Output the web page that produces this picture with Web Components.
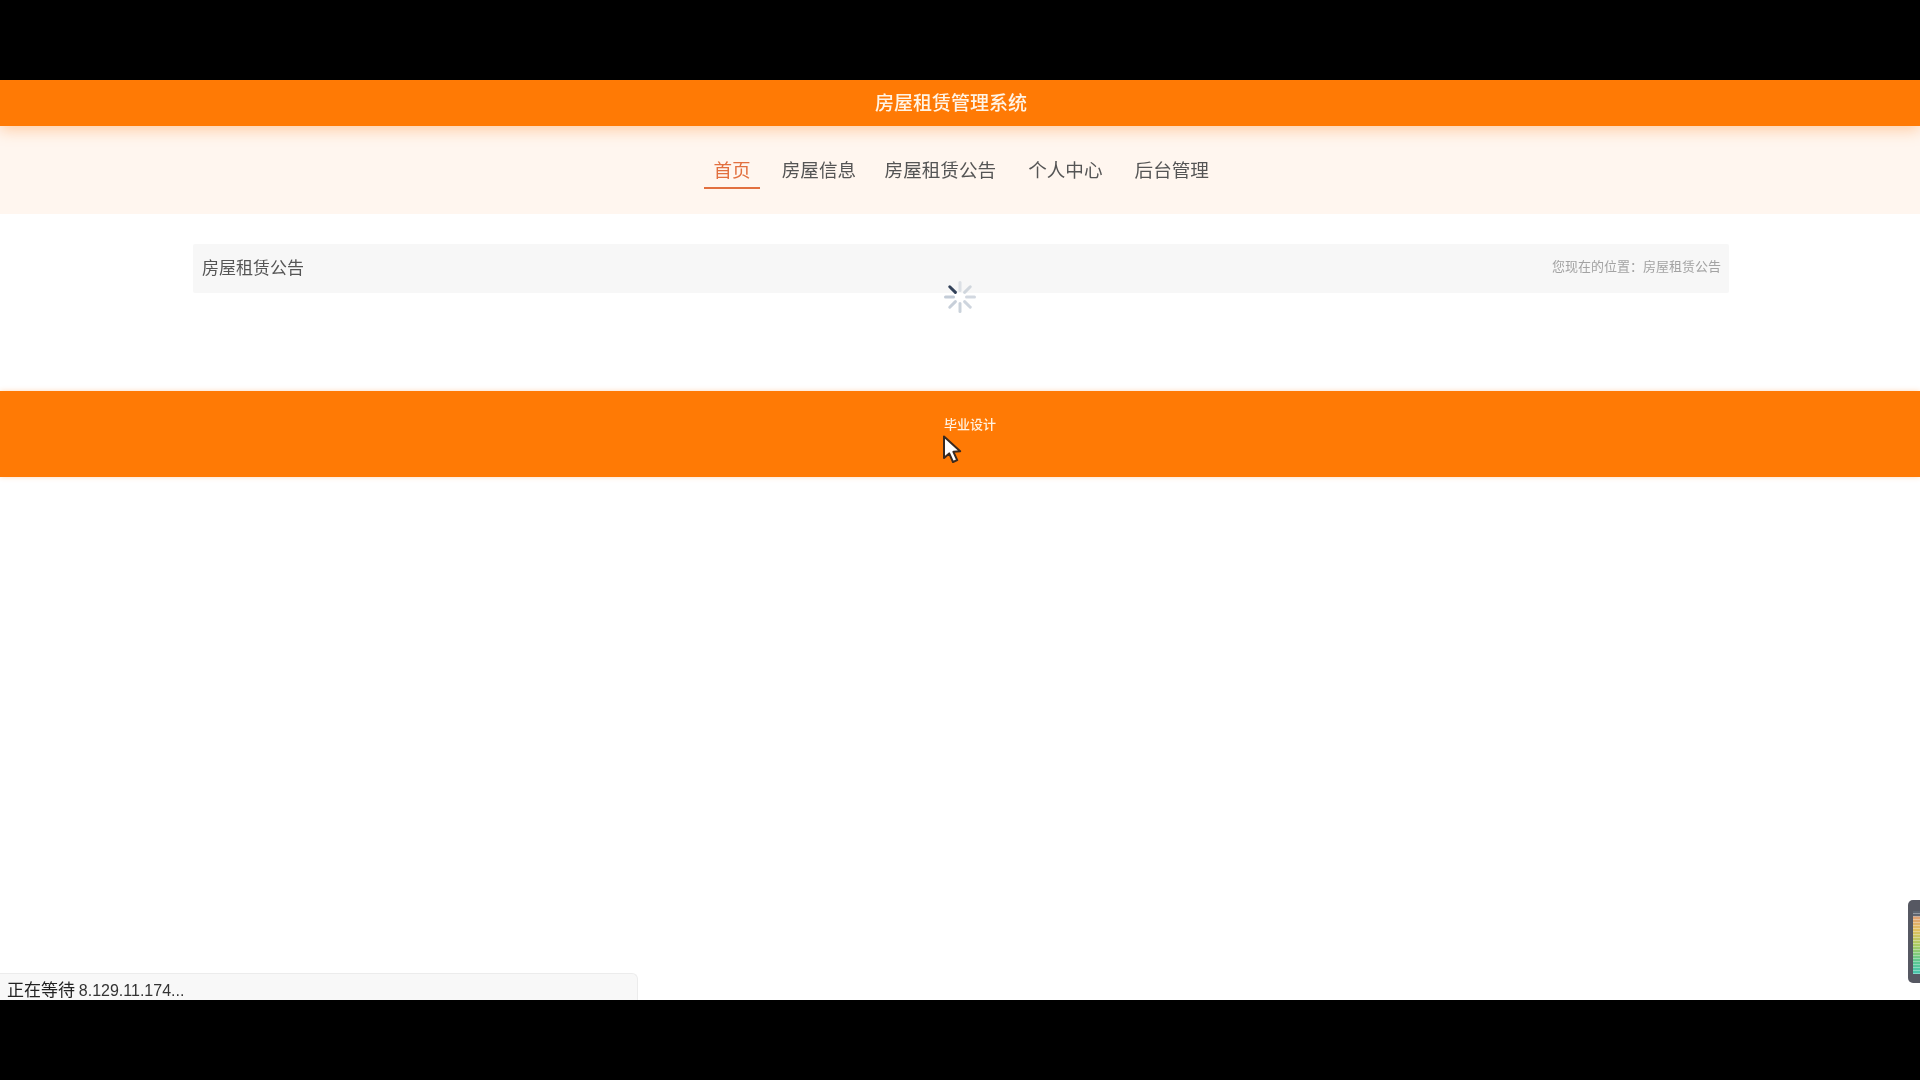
<!DOCTYPE html>
<html lang="zh"><head><meta charset="utf-8"><title>房屋租赁管理系统</title>
<style>
html,body{margin:0;height:100%;background:#000;overflow:hidden}
body{font-family:"Noto Sans CJK SC","Liberation Sans",sans-serif}
</style></head><body>
<video-frame>
  <site-header slot="page">房屋租赁管理系统</site-header>
  <site-nav slot="page">
    <nav-item active>首页</nav-item>
    <nav-item style="margin-left:12px">房屋信息</nav-item>
    <nav-item style="margin-left:9.5px">房屋租赁公告</nav-item>
    <nav-item style="margin-left:13px">个人中心</nav-item>
    <nav-item style="margin-left:13px">后台管理</nav-item>
  </site-nav>
  <page-bar slot="page" title-text="房屋租赁公告" crumb="您现在的位置：房屋租赁公告"></page-bar>
  <site-footer slot="page">毕业设计</site-footer>
</video-frame>
<script>
function def(name, html, init){
  customElements.define(name, class extends HTMLElement{
    constructor(){super();this.attachShadow({mode:'open'}).innerHTML=html;}
    connectedCallback(){ if(init) init(this); }
  });
}
const spokes=[...Array(8)].map((_,i)=>{
  const op=i===0?1:(i===1?.25:.3+.03*i);
  const col=i===0?'#33425a':'#8a9bb0';
  return `<line x1="16" y1="1.5" x2="16" y2="9.5" stroke="${col}" stroke-opacity="${op}" stroke-width="3" stroke-linecap="round" transform="rotate(${-45+i*45} 16 16)"/>`;
}).join('');
def('video-frame',`<style>
:host{display:flex;flex-direction:column;height:1080px;width:1920px;position:relative;background:#000}
.top,.bottom{flex:0 0 80px;background:#000}
.screen{flex:1;background:#fff;position:relative;overflow:hidden;display:flex;flex-direction:column}
.spinner{position:absolute;left:944px;top:201px;width:32px;height:32px;filter:blur(.5px)}
.cursor{position:absolute;left:942px;top:355px;width:20px;height:29px;filter:blur(.4px)}
.status{position:absolute;left:0;bottom:0;width:638px;height:27px;box-sizing:border-box;background:#f8f8f8;border:1px solid #ececec;border-left:0;border-bottom:0;border-top-right-radius:6px;color:#222;font-size:17px;line-height:29px;padding-left:7px;white-space:nowrap;overflow:hidden;filter:blur(.3px)}
.status span{font-family:"Liberation Sans",sans-serif;font-size:16px;color:#333}
.widget{position:absolute;right:-8px;top:820px;width:20px;height:83px;box-sizing:border-box;border-radius:5px;background:#565862;padding:11px 3px 9px 5px;filter:blur(.4px)}
.widget i{display:block;height:100%;background:repeating-linear-gradient(#0000 0 2px,#fff5 2px 3px),linear-gradient(#5d6470 0 7%,#e0a070 10%,#e2c05e 30%,#a8cb62 55%,#5cc890 80%,#46c4ae 100%)}
</style>
<div class="top"></div>
<div class="screen"><slot name="page"></slot>
<svg class="spinner" viewBox="0 0 32 32" aria-hidden="true">${spokes}</svg>
<svg class="cursor" viewBox="0 0 20 29" aria-hidden="true"><path d="M2 1.5V23l5.2-4.6L11 27l4.2-1.9-3.8-8.3 6.8-.5z" fill="#fff" stroke="#3a2a20" stroke-width="2" stroke-linejoin="round"/></svg>
<div class="status">正在等待 <span>8.129.11.174...</span></div>
<div class="widget"><i></i></div>
</div>
<div class="bottom"></div>`);
def('site-header',`<style>
:host{display:flex;justify-content:center;box-sizing:border-box;height:46px;background:#ff7a05;color:#fff4e6;font-size:19px;line-height:28px;font-weight:500;padding:8px 18px 0 0;box-shadow:0 4px 14px rgba(255,130,30,.35);position:relative;z-index:1;filter:blur(.35px)}
</style><slot></slot>`);
def('site-nav',`<style>
:host{display:flex;justify-content:flex-start;align-items:flex-start;height:88px;box-sizing:border-box;background:#fff6ef;padding:23px 0 0 704px}
</style><slot></slot>`);
def('nav-item',`<style>
:host{display:block;box-sizing:border-box;height:40px;padding:0 9.5px;font-size:18.6px;line-height:40px;color:#555;white-space:nowrap;filter:blur(.35px)}
:host([active]){color:#e2703f;border-bottom:2.5px solid #e2703f}
</style><slot></slot>`);
def('page-bar',`<style>
:host{display:block;padding:30px 191px 0 193px;height:177px;box-sizing:border-box}
.bar{display:flex;justify-content:space-between;align-items:center;height:49px;background:#f7f7f7;padding:0 8px 4px 9px;box-sizing:border-box;border-radius:2px;filter:blur(.35px)}
.t{font-size:17px;color:#555}.c{font-size:13px;color:#a3a3a3;position:relative;top:-1px}
</style><div class="bar"><span class="t"></span><span class="c"></span></div>`,el=>{
  el.shadowRoot.querySelector('.t').textContent=el.getAttribute('title-text');
  el.shadowRoot.querySelector('.c').textContent=el.getAttribute('crumb');
});
def('site-footer',`<style>
:host{display:flex;justify-content:center;box-sizing:border-box;height:86px;background:#ff7a05;color:#fff1e0;font-size:13px;line-height:20px;font-weight:500;padding:23px 0 0 20px;box-shadow:0 0 5px rgba(255,130,30,.3);filter:blur(.3px)}
</style><slot></slot>`);
</script>
</body></html>
